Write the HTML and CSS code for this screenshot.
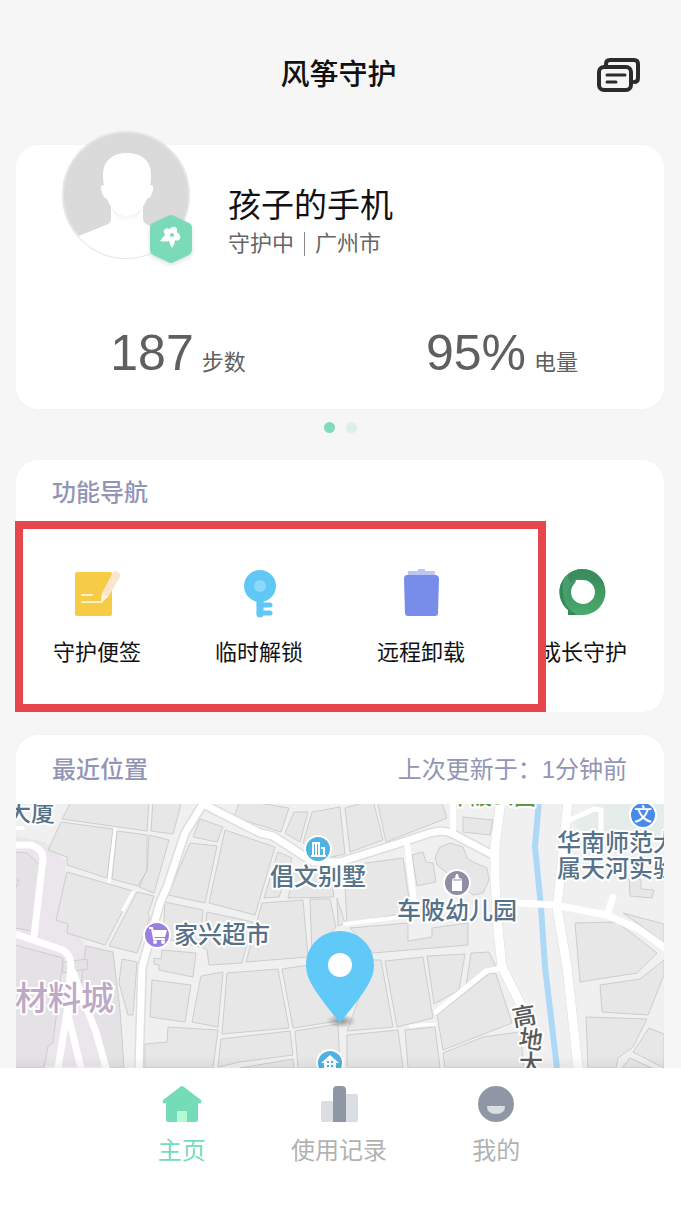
FILE: index.html
```
<!DOCTYPE html>
<html lang="zh-CN">
<head>
  <meta charset="UTF-8" />
  <meta name="viewport" content="width=device-width, initial-scale=1" />
  <title>风筝守护</title>
  <link rel="stylesheet" href="styles.css">
</head>
<body>

  <header class="header">
    <h1>风筝守护</h1>
    <button type="button" class="message-btn" aria-label="消息">
      <svg width="44" height="36" viewBox="0 0 44 36" fill="none" stroke="#2b2b2b" stroke-width="4" stroke-linecap="round" stroke-linejoin="round">
        <path d="M9 8V7q0-4 4-4h24q4 0 4 4v14q0 4-4 4" />
        <rect x="2" y="10" width="32" height="23" rx="5" />
        <path d="M10 18h18M10 25h9" stroke-width="3" />
      </svg>
    </button>
  </header>

  <main class="content">
    <section class="card device">
      <div class="profile">
        <div class="avatar">
          <svg width="128" height="128" viewBox="0 0 128 128">
            <defs>
              <clipPath id="avatarClip"><circle cx="64" cy="64" r="63" /></clipPath>
              <linearGradient id="neck" x1="0" y1="0" x2="0" y2="1">
                <stop offset="0" stop-color="#ececec" />
                <stop offset="1" stop-color="#ffffff" />
              </linearGradient>
            </defs>
            <circle cx="64" cy="64" r="63" fill="#dadada" stroke="#e6e6e6" stroke-width="2" />
            <g clip-path="url(#avatarClip)">
              <path d="M49 64v24q0 4-5 6L14 106v24h100v-24L86 94q-5-2-5-6V64z" fill="#fff" />
              <path d="M49 76h32q-6 14-16 15Q55 90 49 76z" fill="url(#neck)" />
            </g>
            <path d="M65 22C49 22 41 31 41 44q0 6 1 10-4 0-3 4 1 8 6 10 6 16 20 17 14-1 20-17 5-2 6-10 1-4-3-4 1-4 1-10C89 31 81 22 65 22z" fill="#fff" />
          </svg>
          <svg class="badge" width="42" height="50" viewBox="0 0 42 50">
            <path d="M18 2q3-2 6 0l15 7q3 1 3 5v22q0 3-3 5L24 48q-3 2-6 0L3 41q-3-2-3-5V14q0-4 3-5z" fill="#7bdbb9" />
            <path d="M20 15q2-3 5-2 3 1 2 5l3 3q1 3-1 5-2 1-4 0 0 4-3 8-2-3-3-7-4 1-9 0l5-6q-2-3-1-5 2-3 6-1z" fill="#fff" />
            <circle cx="22" cy="21" r="2" fill="#7bdbb9" />
          </svg>
        </div>
        <div class="info">
          <h2>孩子的手机</h2>
          <p class="status"><span>守护中</span><span>广州市</span></p>
        </div>
      </div>
      <div class="stats">
        <p class="stat"><strong>187</strong><span>步数</span></p>
        <p class="stat"><strong>95%</strong><span>电量</span></p>
      </div>
    </section>

    <div class="dots">
      <span class="dot active"></span>
      <span class="dot"></span>
    </div>

    <section class="card functions">
      <h3>功能导航</h3>
      <nav class="function-list">
        <a href="#note">
          <svg width="50" height="50" viewBox="0 0 50 50">
            <rect x="3" y="4" width="37" height="44" rx="2" fill="#f6cb45" />
            <path d="M10 27h10M10 34h20" stroke="#fdf0cb" stroke-width="2" stroke-linecap="round" />
            <path d="M41 4q2-2 5 0t2 5L36 29l-6 5-1-1 1-8z" fill="#f9e6cb" />
            <path d="M30 25l6 4-6 5-1-1z" fill="#fdf3df" />
          </svg>
          <span>守护便签</span>
        </a>
        <a href="#unlock">
          <svg width="50" height="50" viewBox="0 0 50 50">
            <path d="M25 37h11M25 45h11" stroke="#61c8f6" stroke-width="5" stroke-linecap="round" />
            <path d="M26 32v14" stroke="#61c8f6" stroke-width="7" stroke-linecap="round" />
            <circle cx="26" cy="18" r="16" fill="#61c8f6" />
            <circle cx="26" cy="18" r="6" fill="#8ad8fa" />
          </svg>
          <span>临时解锁</span>
        </a>
        <a href="#uninstall">
          <svg width="50" height="50" viewBox="0 0 50 50">
            <path d="M12 3h10V1h7v2h10v6H12z" fill="#bcc5f4" />
            <path d="M11 7h28q4 0 4 4l-1 34q0 3-3 3H12q-3 0-3-3L8 11q0-4 3-4z" fill="#788de9" />
          </svg>
          <span>远程卸载</span>
        </a>
        <a href="#growth">
          <svg width="50" height="50" viewBox="0 0 50 50">
            <defs>
              <linearGradient id="ring" x1="0" y1="0" x2="0" y2="1">
                <stop offset="0" stop-color="#35875a" />
                <stop offset="1" stop-color="#4bab6d" />
              </linearGradient>
            </defs>
            <path d="M24 1a23 23 0 0 1 1 46H10v-5A23 23 0 0 1 24 1z" fill="url(#ring)" />
            <path d="M8 8Q0 17 2 27q2 10 8 15v5h9Q6 40 5 27 4 16 8 8z" fill="#38875a" />
            <path d="M6 10Q14 1 25 1q15 1 21 15-9-7-20-6-8 1-14 8-4 7-3 17Q2 22 6 10z" fill="#479f6b" />
            <path d="M10 6Q24-3 37 5q7 5 9 12-9-8-21-7-7 0-12 5-4-4-3-9z" fill="#36865a" opacity=".7" />
            <path d="M18 12h7a12 12 0 1 1-9 4q2-2 2-4z" fill="#fff" />
          </svg>
          <span>成长守护</span>
        </a>
      </nav>
      <div class="highlight"></div>
    </section>

    <section class="card location">
      <div class="location-head">
        <h3>最近位置</h3>
        <span>上次更新于：1分钟前</span>
      </div>
      <svg class="map" viewBox="16 804 648 264" preserveAspectRatio="xMidYMid slice" role="img" aria-label="地图">
        <defs>
          <linearGradient id="fade" x1="0" y1="0" x2="0" y2="1">
            <stop offset="0" stop-color="#000" stop-opacity="0" />
            <stop offset="1" stop-color="#000" stop-opacity=".05" />
          </linearGradient>
          <radialGradient id="pinShadow">
            <stop offset="0" stop-color="#777" stop-opacity=".8" />
            <stop offset="1" stop-color="#777" stop-opacity="0" />
          </radialGradient>
        </defs>
        <rect x="0" y="790" width="700" height="290" fill="#f0f0f0" />

        <!-- purple and green districts -->
        <path class="district" d="M15 836l30 6 20 18 2 60 20 28-3 40 24 78H15z" />
        <path d="M570 820l24-11V804h70v33h-76z" fill="#e5ecea" />

        <g class="blocks purple">
          <path d="M15 852l12 1 13 12-8 66-17-3zM15 880h4l-4 10" />
          <path d="M15 945l48 13-10 85-5 3-4 22H15z" />
          <path d="M86 946l27 6 7 58 4 58h-16l-10-33-18-45z" />
          <path d="M63 962l24-3 1 10-25 4z" />
        </g>

        <g class="blocks">
          <path d="M72 800l-10 19 85 12 2-31zM153 800h29l-9 34-22-3z" />
          <path d="M61 822l52 7-6 49-40-13v-8l-19-7zM117 831l30 4v35l-9 16-26-7zM149 835l20 5-15 53-15-6 8-17z" />
          <path d="M67 872l66 19-28 54-38-12 1-9-12-4zM137 892l17 4-6 18 2 3-13 36-28-7z" />
          <path d="M200 819l23 8-6 15-24-5zM240 800l49 8-8 24-47-15zM294 812h14l-8 30-15-9z" />
          <path d="M225 830l50 17-20 68-46-12zM190 843l27 3-12 57-37-8z" />
          <path d="M312 812l28-5 5 47-22 5-20-16zM278 852l14 6-4 14-9 25-15 1z" />
          <path d="M345 808l28-8 10 40-33 12zM377 800h64l6 18-61 24z" />
          <path d="M294 872l36-2 4 27-46 1zM344 866l59-8 8 54-64 12z" />
          <path d="M463 817l30 3-3 15-27-3zM412 855l11-3 3 10 7 1 3 19-19 4z" />
          <path d="M435 857l5-10 10-4 13 4 4 11 6 4 14 6 2 12-6 13-10 2-26-22-10-8z" />
          <path d="M165 902l38 8-3 37-37-9zM207 912l46 10-11 41-33 2-2-15-5-3z" />
          <path d="M262 903l41-3 5 57-62 5zM310 899h20l6 28-24 28zM337 898l8 25-7 3z" />
          <path d="M162 950l34 3-3 24-34-7v-5l-5-1v-6l7 1zM152 980l39 5-6 37-35-5zM201 976l22-4-5 55-26-5z" />
          <path d="M122 959l15 3-4 53h-5l-9-32zM227 973l51-4 11 59-67 6zM282 969l26-4 30 56-45 7z" />
          <path d="M221 1039l69-8 3 24-53 7-22 5zM295 1031l43-7 2 44h-42z" />
          <path d="M168 1027l50 3-5 38h-68v-24l22-2zM240 1068l53-9 1 9z" />
          <path d="M350 928l58-5v18l24-4v-9l36-5v22l-95 8z" />
          <path d="M373 960h8l12 67-46 4zM385 961l38-4 10 61-36 9zM427 956l38-2-6 36-25 14z" />
          <path d="M471 953l18-1 7 15-9 5-21 15zM490 973l6 1 16 49-69 27-6-35z" />
          <path d="M347 1035l51-5 5 38h-56zM405 1030l30-3 5 41h-32zM443 1053l40-16 37-5 4 36h-79z" />
          <path d="M575 923l42-1 40 31-20 20-57 9zM600 985l40-6 24-19v15l-16 40-46-3z" />
          <path d="M586 1017l61 2-14 28-15 11-2 10h-28zM633 1052l16-24 15 6v34zM622 1068l8-10 22 10z" />
          <path d="M623 913l41 11v19l-24-18zM629 876l12 4v9l13 1-2 8-22-2z" />
        </g>

        <!-- river, main roads -->
        <path d="M539 800l-4 47 6 60 4 60 12 101" fill="none" stroke="#add8f6" stroke-width="6" />
        <g class="road-edge">
          <path d="M203 804l-18 29-18 54-7 16-18 64-3 101" />
          <path d="M203 804l57 29 13 3 40 26h27l63-20 27-9q14-4 23 1l40 21" />
          <path d="M501 800l-6 47v33l3 50 4 37 18 36" />
          <path d="M568 800l-6 63-5 44 10 60 11 101" />
        </g>
        <g class="roads">
          <path d="M203 804l-18 29-18 54-7 16-18 64-3 101" stroke-width="7" />
          <path d="M203 804l57 29 13 3 40 26h27l63-20 27-9q14-4 23 1l40 21" stroke-width="7" />
          <path d="M501 800l-6 47v33l3 50 4 37 18 36" stroke-width="9" />
          <path d="M568 800l-6 63-5 44 10 60 11 101" stroke-width="9" />
          <path d="M453 800v32M407 843l7 60" stroke-width="6" />
          <path d="M518 903l36 2 53 10 33 15 28 20M613 897l-6 18" stroke-width="7" />
          <path d="M570 820l24-11 7 1v26" stroke-width="5" />
          <path d="M502 968l-16 3-50 41" stroke-width="5" />
          <path d="M115 829l-6 53M133 892l-10 18M410 1026l25-2" stroke-width="3" />
          <path d="M15 845h16q12 4 12 14l-9 77M15 934l45 15q10 3 11 16l-4 48-9 55M68 1015l13 53M73 972l23 60 10 36" stroke-width="7" />
          <path d="M345 924l55-7M15 828h8" stroke-width="4" />
        </g>

        <!-- places -->
        <g class="labels">
          <text x="7" y="821">大厦</text>
          <text x="270" y="885">倡文别墅</text>
          <text x="397" y="919">车陂幼儿园</text>
          <text x="174" y="943">家兴超市</text>
          <text x="557" y="851">华南师范大</text>
          <text x="557" y="877">属天河实验</text>
          <text class="park" x="448" y="804">车陂公园</text>
          <text class="area" x="15" y="1010">材料城</text>
          <g class="street">
            <text x="512" y="1025" transform="rotate(-10 523 1016)">高</text>
            <text x="519" y="1048" transform="rotate(8 531 1039)">地</text>
            <text x="519" y="1072">大</text>
          </g>
        </g>

        <g class="markers">
          <circle cx="318" cy="849" r="13" fill="#50b2e2" />
          <path d="M313 856v-13h6v13M316 844v12M321 848h3v8M311 856h15" fill="none" stroke="#fff" stroke-width="2" />
          <circle cx="457" cy="883" r="13" fill="#8e8fa5" />
          <path d="M452 891v-10q0-3 3-3l1-4h2l1 4q3 0 3 3v10z" fill="#fff" />
          <path d="M453 880h8" stroke="#8e8fa5" />
          <circle cx="157" cy="935" r="13" fill="#9b7fe0" />
          <path d="M149 928h3l2 11h11" fill="none" stroke="#fff" stroke-width="2" />
          <path d="M153 930h14l-2 7h-11z" fill="#fff" />
          <circle cx="155" cy="942" r="2" fill="#fff" /><circle cx="163" cy="942" r="2" fill="#fff" />
          <circle cx="643" cy="815" r="13" fill="#478bea" />
          <text class="marker-text" x="643" y="821" text-anchor="middle">文</text>
          <circle cx="330" cy="1063" r="13" fill="#50b2e2" />
          <path d="M321 1063l9-8 9 8h-3v9h-12v-9z" fill="#fff" />
          <path d="M327 1061h2v2h-2zM331 1061h2v2h-2zM327 1065h2v2h-2zM331 1065h2v2h-2z" fill="#50b2e2" />
        </g>

        <!-- current position -->
        <ellipse cx="341" cy="1021" rx="15" ry="7" fill="url(#pinShadow)" />
        <path d="M340 931c19 0 34 15 34 34 0 16-12 30-34 58-22-28-34-42-34-58 0-19 15-34 34-34z" fill="#61c9f8" />
        <circle cx="340" cy="965" r="12" fill="#fff" />
        <rect x="0" y="1056" width="700" height="12" fill="url(#fade)" />
      </svg>
    </section>
  </main>

  <nav class="tabbar">
    <a href="#home" class="active">
      <svg width="40" height="40" viewBox="0 0 40 40">
        <path d="M18 3q2-2 4 0l17 13q1 1 0 3-1 1-3 0v17q0 2-2 2H6q-2 0-2-2V19q-2 1-3 0-1-2 0-3z" fill="#75dcb8" />
        <path d="M15 38V28q0-1 1-1h8q1 0 1 1v10z" fill="#b4fbd3" />
      </svg>
      <span>主页</span>
    </a>
    <a href="#records">
      <svg width="40" height="40" viewBox="0 0 40 40">
        <rect x="2" y="17" width="14" height="21" rx="2" fill="#dadde1" />
        <rect x="26" y="10" width="13" height="28" rx="2" fill="#dadde1" />
        <path d="M14 38V6q0-4 4-4h5q4 0 4 4v32z" fill="#8f97a5" />
      </svg>
      <span>使用记录</span>
    </a>
    <a href="#mine">
      <svg width="40" height="40" viewBox="0 0 40 40">
        <circle cx="20" cy="20" r="18" fill="#8f97a5" />
        <path d="M11 22h18q0 8-9 8t-9-8z" fill="#dadde1" />
      </svg>
      <span>我的</span>
    </a>
  </nav>

</body>
</html>
```
FILE: styles.css
```
* {
  box-sizing: border-box;
}
body {
  display: flex;
  flex-direction: column;
  min-height: 100vh;
  margin: 0;
  background: #f6f6f6;
  color: #111;
  font-family: "Liberation Sans", "Noto Sans CJK SC", sans-serif;
}
h1, h2, h3, p {
  margin: 0;
}
a {
  color: inherit;
  text-decoration: none;
}
svg {
  display: block;
}

/* header */
.header {
  display: grid;
  grid-template-columns: 1fr auto 1fr;
  align-items: center;
  height: 145px;
  padding: 4px 40px 0 36px;
}
.header h1 {
  grid-column: 2;
  font-size: 29px;
  line-height: 40px;
  font-weight: 500;
}
.message-btn {
  justify-self: end;
  padding: 0;
  border: none;
  background: none;
  cursor: pointer;
}

.content {
  flex: 1;
  padding: 0 17px 0 16px;
}
.card {
  position: relative;
  background: #fff;
  border-radius: 22px;
  box-shadow: 0 0 2px rgba(0, 0, 0, 0.04);
}

/* device card */
.device {
  padding-bottom: 26px;
}
.profile {
  display: flex;
  align-items: flex-start;
  gap: 38px;
  padding-left: 46px;
}
.avatar {
  position: relative;
  margin-top: -14px;
}
.badge {
  position: absolute;
  left: 88px;
  top: 83px;
  filter: drop-shadow(0 2px 2px rgba(0, 0, 0, 0.12));
}
.info {
  padding-top: 39px;
}
.info h2 {
  font-size: 33px;
  line-height: 44px;
  font-weight: 400;
}
.status {
  display: flex;
  align-items: center;
  color: #666;
  font-size: 22px;
  line-height: 32px;
}
.status span + span {
  margin-left: 10px;
  padding-left: 10px;
  border-left: 1px solid #888;
  line-height: 24px;
}
.stats {
  display: grid;
  grid-template-columns: 1fr 1fr;
  margin-top: 63px;
}
.stat {
  display: flex;
  justify-content: center;
  align-items: baseline;
  gap: 8px;
  height: 60px;
  color: #5f5f5f;
  font-size: 22px;
  line-height: 60px;
}
.stat strong {
  font-size: 50px;
  font-weight: 400;
}

.dots {
  display: flex;
  justify-content: center;
  gap: 11px;
  padding: 13px 0 27px;
}
.dot {
  width: 11px;
  height: 11px;
  border-radius: 50%;
  background: #dbf0e8;
}
.dot.active {
  background: #7edcbb;
}

/* functions */
h3 {
  color: #9295b5;
  font-size: 24px;
  line-height: 34px;
  font-weight: 500;
}
.functions {
  padding: 16px 0 43px;
}
.functions h3 {
  padding-left: 36px;
}
.function-list {
  display: grid;
  grid-template-columns: repeat(4, 1fr);
  margin-top: 58px;
}
.function-list a {
  display: flex;
  flex-direction: column;
  align-items: center;
  gap: 19px;
  font-size: 22px;
  line-height: 32px;
}
.highlight {
  position: absolute;
  left: -1px;
  top: 61px;
  bottom: 0;
  width: 82%;
  border: 8px solid #e7474c;
  pointer-events: none;
}

/* location */
.location {
  margin-top: 23px;
}
.location-head {
  display: flex;
  justify-content: space-between;
  padding: 18px 37px 17px 36px;
  color: #9295b5;
  font-size: 24px;
  line-height: 34px;
}
.map {
  width: 100%;
  height: 264px;
}
.district {
  fill: #ebe5ec;
}
.blocks {
  fill: #e7e7e7;
  stroke: #cdcdcd;
}
.purple {
  fill: #e5e2e6;
}
.road-edge {
  fill: none;
  stroke: #dedede;
  stroke-width: 10px;
}
.roads {
  fill: none;
  stroke: #fff;
  stroke-linecap: round;
  stroke-linejoin: round;
}
.labels {
  fill: #567288;
  stroke: #fff;
  stroke-width: 4px;
  stroke-linejoin: round;
  paint-order: stroke;
  font-family: "Noto Sans CJK SC", sans-serif;
  font-size: 24px;
  font-weight: 500;
}
.park {
  fill: #5c9a3c;
  font-size: 22px;
}
.area {
  fill: #bda9c5;
  font-size: 33px;
}
.street {
  fill: #5a5a5a;
}
.markers circle[r="13"] {
  stroke: #fff;
  stroke-width: 2px;
}
.marker-text {
  fill: #fff;
  font-size: 18px;
  font-weight: 500;
}

/* tab bar */
.tabbar {
  position: relative;
  display: grid;
  grid-template-columns: repeat(3, 1fr);
  padding: 16px 106px 41px 103px;
  background: #fff;
  color: #b2b2b2;
}
.tabbar a {
  display: flex;
  flex-direction: column;
  align-items: center;
  gap: 10px;
  font-size: 24px;
  line-height: 34px;
}
.tabbar .active {
  color: #75dcb8;
}
```
